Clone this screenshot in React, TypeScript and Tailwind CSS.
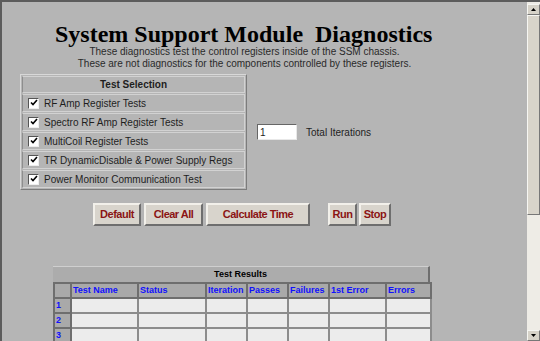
import React from 'react'

const tests = [
  'RF Amp Register Tests',
  'Spectro RF Amp Register Tests',
  'MultiCoil Register Tests',
  'TR DynamicDisable & Power Supply Regs',
  'Power Monitor Communication Test',
]

const columns = [
  { label: '', w: 'w-[17px]' },
  { label: 'Test Name', w: 'w-[67px]' },
  { label: 'Status', w: 'w-[68px]' },
  { label: 'Iteration', w: 'w-[41px]' },
  { label: 'Passes', w: 'w-[41px]' },
  { label: 'Failures', w: 'w-[41px]' },
  { label: '1st Error', w: 'w-[57px]' },
  { label: 'Errors', w: 'w-[45px]' },
]

function Check() {
  return (
    <span className="flex h-[11px] w-[11px] shrink-0 items-center justify-center border border-t-[#555] border-l-[#555] border-b-[#eee] border-r-[#eee] bg-white">
      <svg width="8" height="8" viewBox="0 0 8 8">
        <path d="M1 3.5 L3 5.5 L7 1" stroke="#000" strokeWidth="1.6" fill="none" />
      </svg>
    </span>
  )
}

function Btn({ label, w }: { label: string; w: string }) {
  return (
    <button
      className={`${w} h-[23px] border-2 border-t-[#f2f0ea] border-l-[#f2f0ea] border-b-[#6e6e6e] border-r-[#6e6e6e] bg-[#d8d4cc] text-[11px] font-bold tracking-[-0.5px] text-[#8b1414]`}
    >
      {label}
    </button>
  )
}

function ScrollBar() {
  return (
    <div className="flex w-[13px] flex-col bg-[#eeece6]">
      <div className="mt-[2px] flex h-[11px] items-center justify-center border border-t-[#f6f6f2] border-l-[#f6f6f2] border-b-[#777] border-r-[#777] bg-[#d6d2c8]">
        <svg width="5" height="3" viewBox="0 0 5 3"><path d="M0 3 L2.5 0 L5 3Z" fill="#000" /></svg>
      </div>
      <div className="h-[200px] border border-t-[#f6f6f2] border-l-[#f6f6f2] border-b-[#777] border-r-[#777] bg-[#d8d4ca]" />
      <div className="flex-1" />
      <div className="flex h-[11px] items-center justify-center border border-t-[#f6f6f2] border-l-[#f6f6f2] border-b-[#777] border-r-[#777] bg-[#d6d2c8]">
        <svg width="5" height="3" viewBox="0 0 5 3"><path d="M0 0 L2.5 3 L5 0Z" fill="#000" /></svg>
      </div>
    </div>
  )
}

export default function App() {
  return (
    <div className="flex h-[341px] w-[540px] overflow-hidden border-t-2 border-l-2 border-[#5c5c5c] bg-[#b5b5b5] font-['Liberation_Sans',Arial,sans-serif] text-[#1e1e1e]">
      <div className="flex-1">
        <h1 className="mt-[20px] whitespace-pre pl-[53px] font-['Liberation_Serif','Times_New_Roman',serif] text-[24px] font-bold leading-[24px] text-black">
          {'System Support Module  Diagnostics'}
        </h1>
        <div className="w-[485px] text-center text-[10px] leading-[12px] text-[#2a2a2a]">
          <p>These diagnostics test the control registers inside of the SSM chassis.</p>
          <p>These are not diagnostics for the components controlled by these registers.</p>
        </div>

        <div className="mt-[4px] flex">
          <div className="ml-[18px] flex w-[227px] flex-col gap-px border border-t-[#d8d8d8] border-l-[#d8d8d8] border-b-[#7c7c7c] border-r-[#7c7c7c] p-px">
            <div className="flex h-[17px] items-center justify-center border border-t-[#d2d2d2] border-l-[#8e8e8e] border-b-[#d2d2d2] border-r-[#d2d2d2] text-[10px] font-bold">
              Test Selection
            </div>
            {tests.map((t) => (
              <div
                key={t}
                className="flex h-[18px] items-center gap-[5px] border border-t-[#d2d2d2] border-l-[#8e8e8e] border-b-[#d2d2d2] border-r-[#d2d2d2] pl-[5px] text-[10px]"
              >
                <Check />
                <span className="whitespace-nowrap">{t}</span>
              </div>
            ))}
          </div>
          <div className="ml-[10px] mt-[50px] flex h-[16px] items-center">
            <div className="flex h-[16px] w-[40px] items-center border border-t-[#666] border-l-[#666] border-b-[#e8e8e8] border-r-[#e8e8e8] bg-white pl-[2px] text-[10px]">
              1
            </div>
            <span className="ml-[9px] text-[10px]">Total Iterations</span>
          </div>
        </div>

        <div className="mt-[13px] flex pl-[91px]">
          <div className="flex gap-[3px]">
            <Btn label="Default" w="w-[48px]" />
            <Btn label="Clear All" w="w-[59px]" />
            <Btn label="Calculate Time" w="w-[104px]" />
          </div>
          <div className="ml-[18px] flex gap-[2px]">
            <Btn label="Run" w="w-[29px]" />
            <Btn label="Stop" w="w-[32px]" />
          </div>
        </div>

        <div className="ml-[51px] mt-[40px] w-[377px]">
          <div className="flex h-[16px] items-center justify-center border-t border-r-2 border-t-[#cfcfcf] border-r-[#6e6e6e] bg-[#acacac] text-[9px] font-bold text-black">
            Test Results
          </div>
          <table className="w-[377px] table-fixed border-collapse">
            <thead>
              <tr className="h-[15px]">
                {columns.map((c) => (
                  <th
                    key={c.label || 'n'}
                    className={`${c.w} overflow-hidden whitespace-nowrap border-2 border-[#6e6e6e] bg-[#a9a9a9] p-0 pl-px text-left align-middle text-[9px] font-bold leading-[11px] text-[#1010ff]`}
                  >
                    {c.label}
                  </th>
                ))}
              </tr>
            </thead>
            <tbody>
              {[1, 2, 3].map((n) => (
                <tr key={n} className="h-[15px]">
                  <td className="border-2 border-[#6e6e6e] bg-[#a9a9a9] p-0 pl-px text-[9px] font-bold leading-[11px] text-[#1010ff]">
                    {n}
                  </td>
                  {columns.slice(1).map((c) => (
                    <td key={c.label} className="border-2 border-[#8c8c8c] bg-[#ececec] p-0" />
                  ))}
                </tr>
              ))}
            </tbody>
          </table>
        </div>
      </div>
      <ScrollBar />
    </div>
  )
}
